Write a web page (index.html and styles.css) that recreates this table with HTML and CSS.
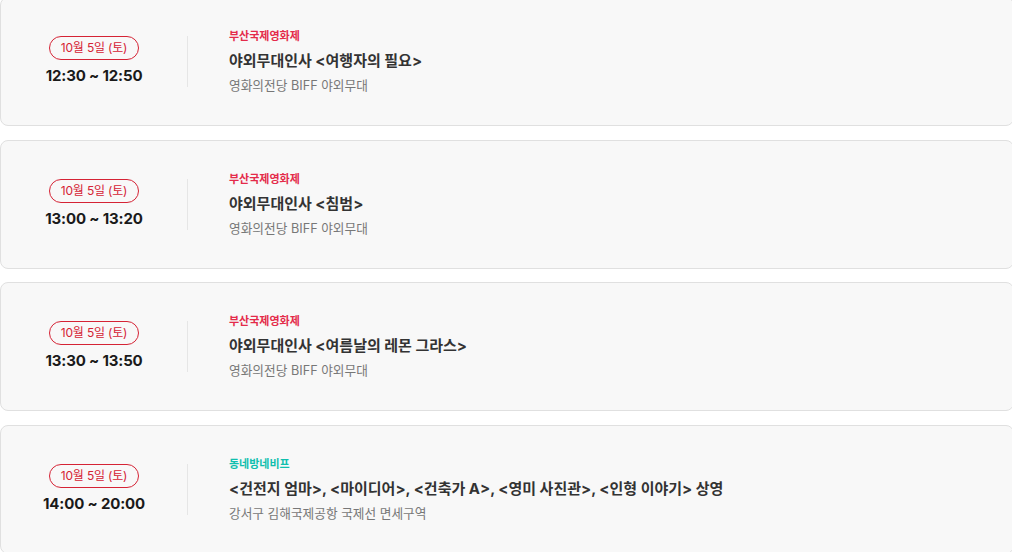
FILE: index.html
```html
<!DOCTYPE html>
<html lang="ko">
<head>
<meta charset="utf-8">
<link rel="stylesheet" href="styles.css">
</head>
<body>
<div class="list">
  <div class="card">
    <div class="when">
      <span class="date">10월 5일 (토)</span>
      <span class="time">12:30 ~ 12:50</span>
    </div>
    <div class="info">
      <div class="cat red">부산국제영화제</div>
      <div class="title">야외무대인사 &lt;여행자의 필요&gt;</div>
      <div class="place">영화의전당 BIFF 야외무대</div>
    </div>
  </div>
  <div class="card">
    <div class="when">
      <span class="date">10월 5일 (토)</span>
      <span class="time">13:00 ~ 13:20</span>
    </div>
    <div class="info">
      <div class="cat red">부산국제영화제</div>
      <div class="title">야외무대인사 &lt;침범&gt;</div>
      <div class="place">영화의전당 BIFF 야외무대</div>
    </div>
  </div>
  <div class="card">
    <div class="when">
      <span class="date">10월 5일 (토)</span>
      <span class="time">13:30 ~ 13:50</span>
    </div>
    <div class="info">
      <div class="cat red">부산국제영화제</div>
      <div class="title">야외무대인사 &lt;여름날의 레몬 그라스&gt;</div>
      <div class="place">영화의전당 BIFF 야외무대</div>
    </div>
  </div>
  <div class="card">
    <div class="when">
      <span class="date">10월 5일 (토)</span>
      <span class="time">14:00 ~ 20:00</span>
    </div>
    <div class="info">
      <div class="cat teal">동네방네비프</div>
      <div class="title">&lt;건전지 엄마&gt;, &lt;마이디어&gt;, &lt;건축가 A&gt;, &lt;영미 사진관&gt;, &lt;인형 이야기&gt; 상영</div>
      <div class="place">강서구 김해국제공항 국제선 면세구역</div>
    </div>
  </div>
</div>
</body>
</html>
```
FILE: styles.css
```css
html, body {
  margin: 0;
  padding: 0;
  background: #ffffff;
  overflow: hidden;
}
body {
  font-family: Inter, "Noto Sans CJK KR", sans-serif;
  color: #222;
}
.list {
  display: flex;
  flex-direction: column;
  gap: 13.5px;
  margin-top: -3px;
  width: 1014px;
}
.card {
  box-sizing: border-box;
  height: 129px;
  background: #f8f8f8;
  border: 1px solid #e0e0e0;
  border-radius: 8px;
  display: flex;
  align-items: center;
}
.when {
  box-sizing: border-box;
  width: 187px;
  height: 51px;
  border-right: 1px solid #e6e6e6;
  display: flex;
  flex-direction: column;
  align-items: center;
  justify-content: flex-start;
  gap: 7px;
}
.date {
  box-sizing: border-box;
  width: 90px;
  height: 24px;
  border: 1px solid #d52335;
  border-radius: 12px;
  color: #d52335;
  font-size: 12px;
  line-height: 22px;
  text-align: center;
  letter-spacing: -0.2px;
}
.time {
  font-size: 15px;
  font-weight: 700;
  color: #1a1a1a;
  line-height: 18px;
  letter-spacing: -0.15px;
}
.info {
  padding-left: 41px;
  display: flex;
  flex-direction: column;
}
.cat {
  font-size: 11px;
  font-weight: 700;
  line-height: 14px;
}
.red { color: #e42b4a; }
.teal { color: #10bfae; }
.title {
  margin-top: 8px;
  font-size: 15px;
  font-weight: 700;
  color: #333;
  line-height: 20px;
}
.place {
  margin-top: 7px;
  font-size: 12.7px;
  color: #777;
  line-height: 16px;
}
```
